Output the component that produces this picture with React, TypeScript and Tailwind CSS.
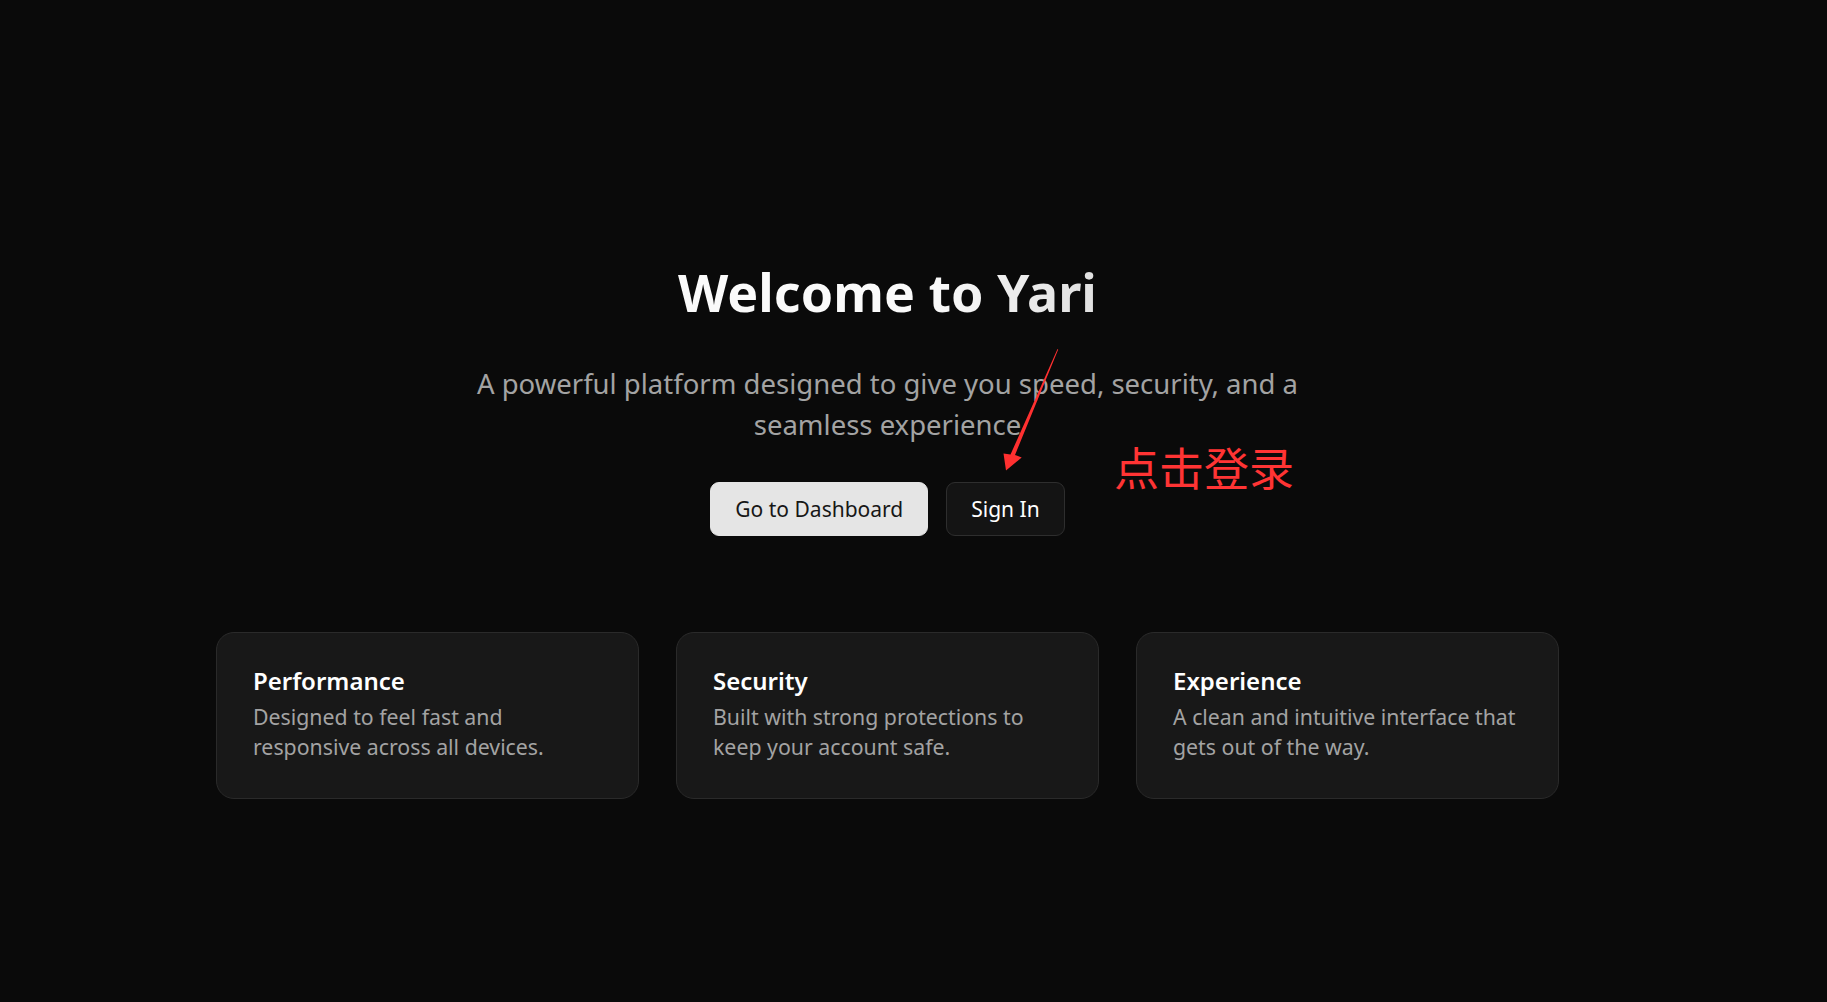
const features = [
  {
    title: 'Performance',
    text: 'Designed to feel fast and responsive across all devices.',
  },
  {
    title: 'Security',
    text: 'Built with strong protections to keep your account safe.',
  },
  {
    title: 'Experience',
    text: 'A clean and intuitive interface that gets out of the way.',
  },
]

export default function App() {
  return (
    <div className="min-h-screen w-full bg-[#0a0a0a] font-['Segoe_UI','Noto_Sans',sans-serif] text-white">
      <main className="relative flex flex-col items-center pt-[261px] pr-[52px] pb-20">
        <h1 className="bg-linear-to-r from-[#fafafa] from-60% to-[#e0e0e0] bg-clip-text text-[52px] font-bold leading-[1.2] text-transparent">
          Welcome to Yari
        </h1>
        <p className="mt-[40px] max-w-[890px] text-center text-[27.5px] leading-[41px] text-[#a3a3a3]">
          A powerful platform designed to give you speed, security, and a seamless experience
        </p>

        <div className="mt-[37px] flex gap-[18px]">
          <button className="rounded-[9px] border border-[#e5e5e5] bg-[#e5e5e5] px-6 py-3 text-[21px] leading-7 text-[#171717]">
            Go to Dashboard
          </button>
          <button className="rounded-[9px] border border-[#2e2e2e] bg-[#141414] px-6 py-3 text-[21px] leading-7 text-white">
            Sign In
          </button>
        </div>

        {/* Feature cards */}
        <div className="mt-[96px] grid w-[1343px] grid-cols-3 gap-[37px]">
          {features.map((f) => (
            <div
              key={f.title}
              className="rounded-[18px] border border-[#2a2a2a] bg-[#181818] px-9 pt-8 pb-9"
            >
              <h3 className="text-2xl font-semibold leading-8 text-white">{f.title}</h3>
              <p className="mt-[5px] text-[21.3px] leading-[30px] text-[#a3a3a3]">{f.text}</p>
            </div>
          ))}
        </div>

        {/* annotation */}
        <svg
          className="pointer-events-none absolute top-0 left-0"
          width="1827"
          height="600"
          viewBox="0 0 1827 600"
        >
          <polygon
            points="1057.5,349 1058.2,349.4 1015,455 1021.7,457.5 1006,470.5 1003.5,453.5 1010.5,454.5"
            fill="#ff3030"
          />
        </svg>
        <div className="absolute top-[439px] left-[1114px] font-['Noto_Sans_CJK_SC',sans-serif] text-[45px] leading-[56px] text-[#ff3434]">
          点击登录
        </div>
      </main>
    </div>
  )
}
